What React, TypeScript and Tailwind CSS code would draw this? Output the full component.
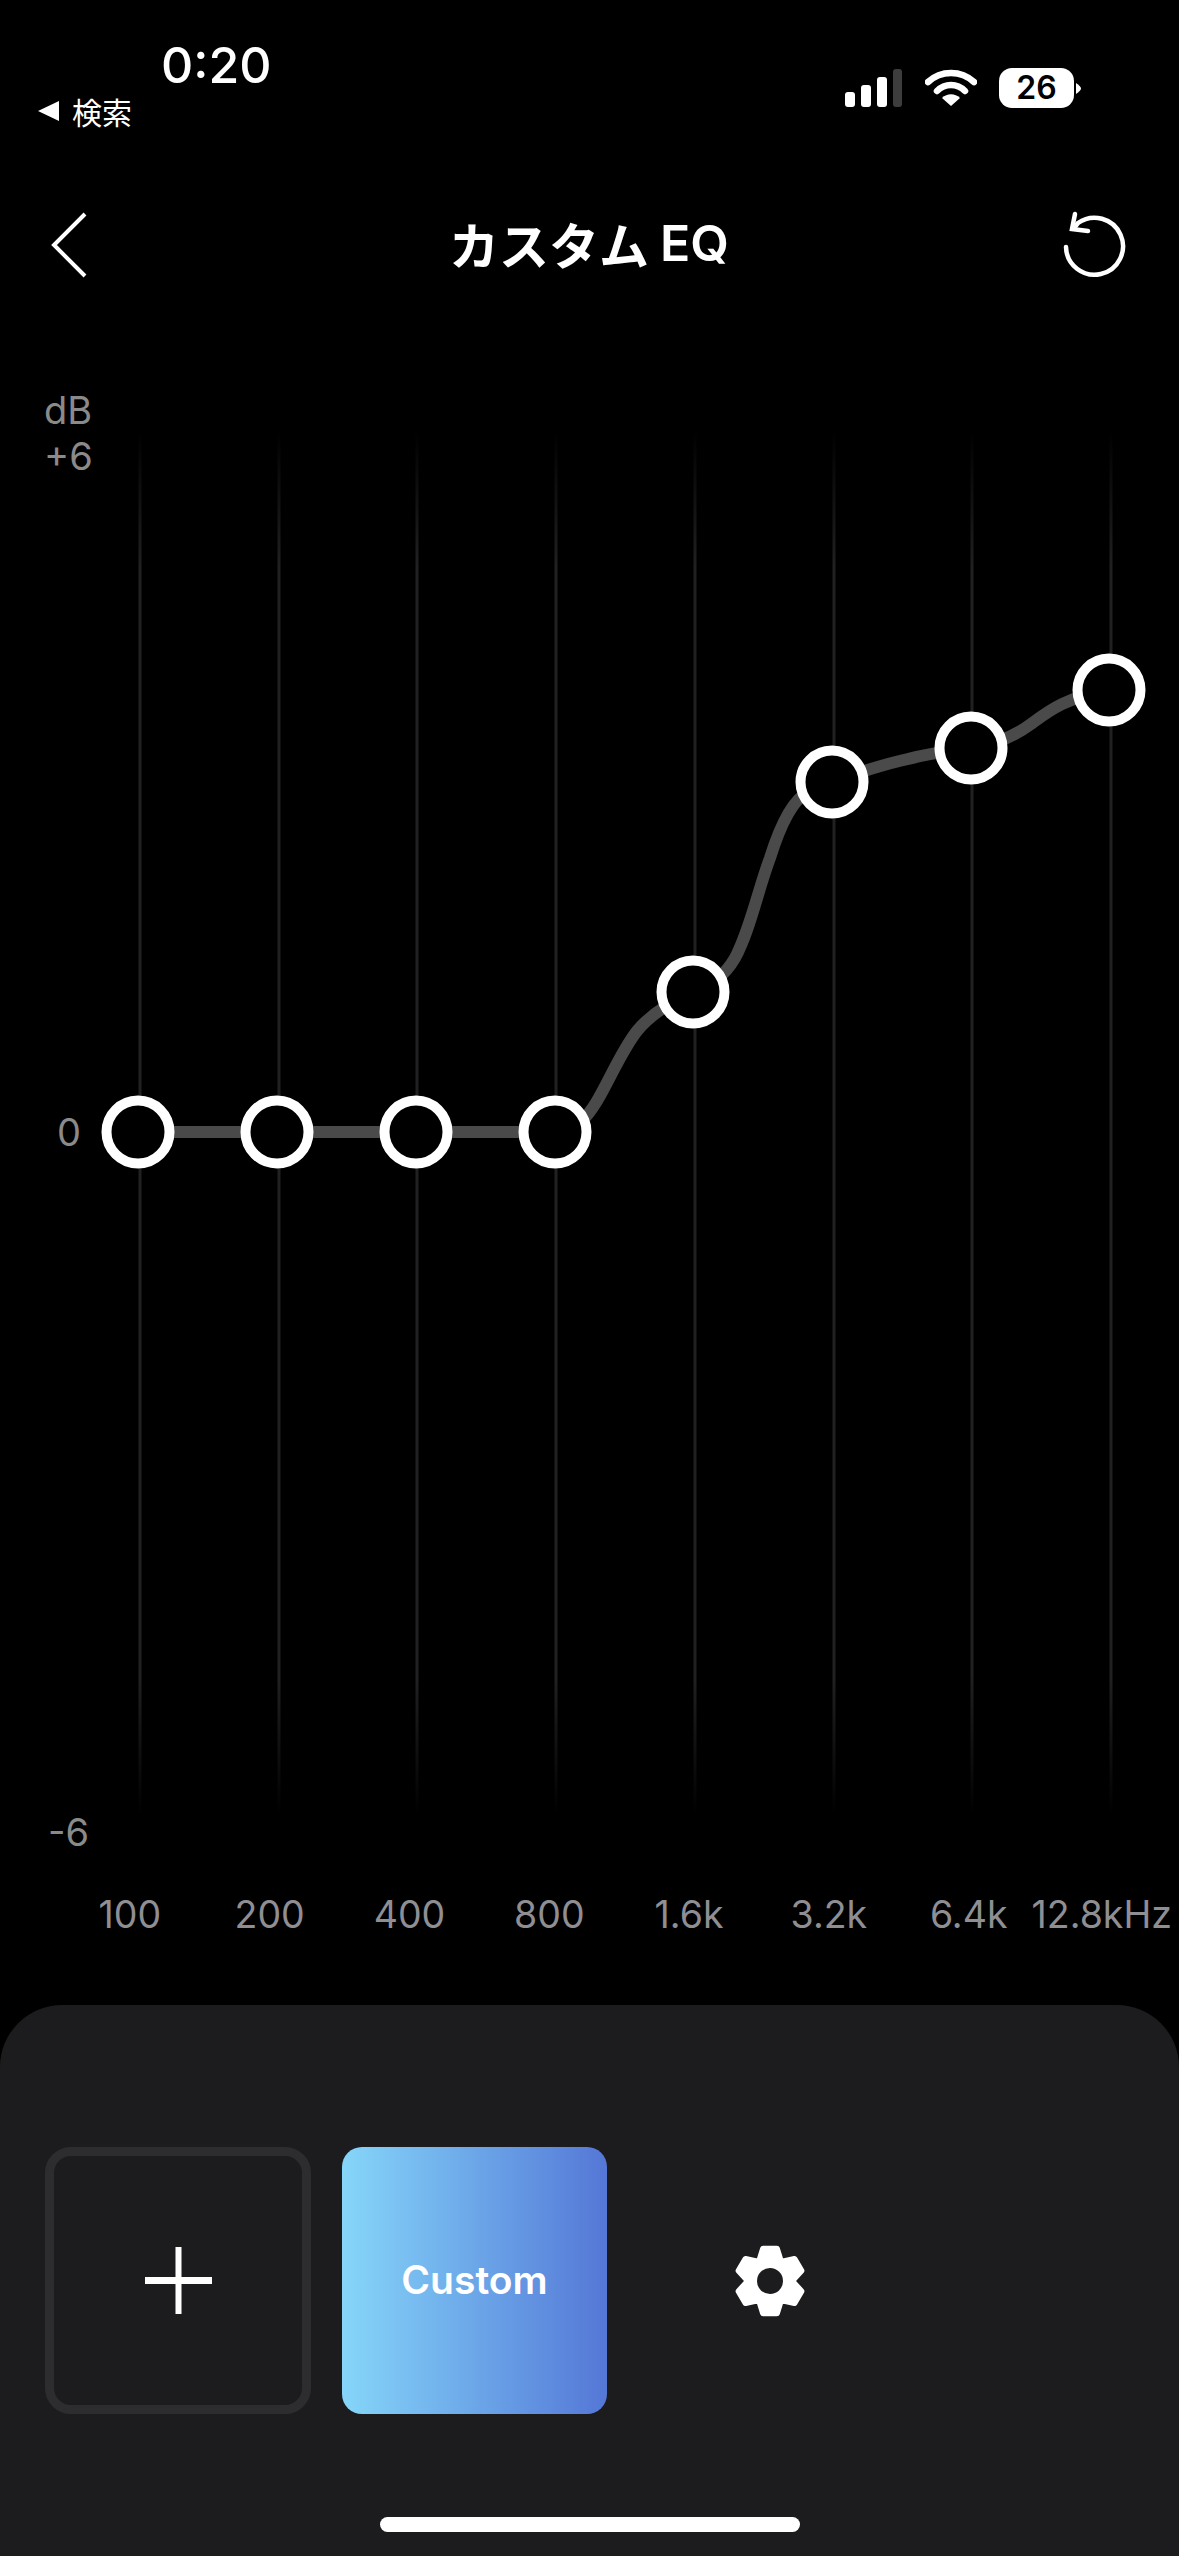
const gridXs = [140, 279, 417, 556, 695, 834, 972, 1111];
const knobs = [
  [138, 1132],
  [277, 1132],
  [416, 1132],
  [555, 1132],
  [693, 992],
  [832, 782],
  [971, 748],
  [1109, 690],
];
const freqs = ['100', '200', '400', '800', '1.6k', '3.2k', '6.4k'];

const curvePath =
  'M138 1132 L555 1132 C576 1132 588 1116 597 1101 C610 1079 622 1050 637 1031 C650 1015 668 1003 693 992 ' +
  'C712 983 724 977 735 958 C750 930 758 890 770 858 C780 826 792 800 808 792 C818 787 824 785 832 782 ' +
  'C860 772 885 764 908 759 C930 753 950 751 971 748 C992 745 1012 738 1031 724 C1050 710 1065 698 1109 690';

// six tooth gear, points worked out around the centre
function gearPoints(cx: number, cy: number) {
  const pts: string[] = [];
  for (let i = 0; i < 6; i++) {
    const a = -90 + i * 60;
    const corners: [number, number][] = [
      [-30, 22],
      [-12, 33],
      [12, 33],
      [30, 22],
    ];
    for (const [off, r] of corners) {
      const t = ((a + off) * Math.PI) / 180;
      pts.push(`${(cx + r * Math.cos(t)).toFixed(1)},${(cy + r * Math.sin(t)).toFixed(1)}`);
    }
  }
  return pts.join(' ');
}

function StatusIcons() {
  return (
    <div className="flex items-center self-start mt-[68px] mr-[98px]">
      <svg width="58" height="38" viewBox="0 0 58 38" className="mr-[22px]">
        <rect x="0" y="23" width="10" height="15" rx="3" fill="#fff" />
        <rect x="16" y="16" width="10" height="22" rx="3" fill="#fff" />
        <rect x="32" y="8" width="10" height="30" rx="3" fill="#fff" />
        <rect x="48" y="0" width="9" height="38" rx="3" fill="#3d3d3d" />
      </svg>
      <svg width="52" height="38" viewBox="0 0 52 38" className="mr-[22px]">
        <path d="M3 13 C16 1 36 1 49 13" fill="none" stroke="#fff" strokeWidth="6.5" strokeLinecap="round" />
        <path d="M12 22 C20 14 32 14 40 22" fill="none" stroke="#fff" strokeWidth="6.5" strokeLinecap="round" />
        <path d="M26 37 L17 29 C22 24 30 24 35 29 Z" fill="#fff" />
      </svg>
      <div className="w-[75px] h-[40px] rounded-[13px] bg-white flex items-center justify-center text-black text-[32px] font-semibold font-['Inter',sans-serif] leading-none">
        26
      </div>
      <svg width="5" height="11" viewBox="0 0 5 11" className="ml-[2px]">
        <path d="M0 0 C3 2 5 4 5 5.5 C5 7 3 9 0 11 Z" fill="#fff" />
      </svg>
    </div>
  );
}

export default function App() {
  return (
    <div className="w-[1179px] h-[2556px] bg-black flex flex-col overflow-hidden text-white font-['Inter','Noto_Sans_CJK_JP',sans-serif]">
      {/* status bar */}
      <div className="h-[190px] flex justify-between">
        <div className="pt-[39px] pl-[38px]">
          <div className="pl-[123px] text-[50px] leading-[52px] font-medium">0:20</div>
          <div className="flex items-center mt-[3px] h-[34px]">
            <svg width="22" height="20" viewBox="0 0 22 20" className="mr-[12px]">
              <path d="M0 10 L21 0 L21 20 Z" fill="#fff" />
            </svg>
            <span className="text-[30px] leading-none font-['Noto_Sans_CJK_JP',sans-serif]">検索</span>
          </div>
        </div>
        <StatusIcons />
      </div>

      {/* nav */}
      <div className="h-[110px] flex items-center justify-between pl-[50px] pr-[51px]">
        <div className="w-[66px]">
          <svg width="38" height="66" viewBox="0 0 38 66" className="block">
            <path d="M35 2 L4 33 L35 64" fill="none" stroke="#fff" strokeWidth="4" />
          </svg>
        </div>
        <h1 className="flex items-center gap-[11px] -mt-[4px] text-[50px] leading-none font-semibold">
          <span className="font-['Noto_Sans_CJK_JP',sans-serif]">カスタム</span>
          <span>EQ</span>
        </h1>
        <svg width="66" height="70" viewBox="1062 208 66 70">
          <path
            d="M1066 245 A28.5 28.5 0 1 0 1078 221 L1074 226"
            fill="none"
            stroke="#fff"
            strokeWidth="4.5"
            strokeLinecap="round"
          />
          <path d="M1075 212 L1072 227 L1088 229" fill="none" stroke="#fff" strokeWidth="4.5" strokeLinecap="round" />
        </svg>
      </div>

      {/* chart */}
      <div className="relative h-[1580px]">
        <svg width="1179" height="1580" viewBox="0 300 1179 1580" className="block">
          <defs>
            <linearGradient id="gridFade" gradientUnits="userSpaceOnUse" x1="0" y1="430" x2="0" y2="1815">
              <stop offset="0" stopColor="#212123" stopOpacity="0" />
              <stop offset="0.1" stopColor="#212123" />
              <stop offset="0.9" stopColor="#212123" />
              <stop offset="1" stopColor="#212123" stopOpacity="0" />
            </linearGradient>
          </defs>
          {gridXs.map((x) => (
            <rect key={x} x={x - 1.5} y="430" width="3" height="1385" fill="url(#gridFade)" />
          ))}
          <path d={curvePath} fill="none" stroke="#4a4a4a" strokeWidth="12" strokeLinecap="round" />
          {knobs.map(([x, y]) => (
            <circle key={x} cx={x} cy={y} r="31.5" fill="#000" stroke="#fff" strokeWidth="10" />
          ))}
        </svg>
        <div className="absolute left-[44px] top-[87px] text-[38px] leading-[46px] text-[#8a8a8a]">
          <div>dB</div>
          <div>+6</div>
        </div>
        <div className="absolute left-[57px] top-[808px] text-[38px] leading-[48px] text-[#8a8a8a]">0</div>
        <div className="absolute left-[48px] top-[1508px] text-[38px] leading-[48px] text-[#8a8a8a]">-6</div>
      </div>

      {/* freq labels */}
      <div className="h-[70px] flex items-center pl-[60px] text-[37.5px] text-[#8e8e93]">
        {freqs.map((f) => (
          <div key={f} className="w-[139.8px] text-center">
            {f}
          </div>
        ))}
        <div className="-ml-[7px] whitespace-nowrap">12.8kHz</div>
      </div>

      {/* presets */}
      <div className="mt-auto h-[551px] rounded-t-[62px] bg-[#1c1c1e] pt-[142px] px-[45px]">
        <div className="flex items-center">
          <div className="w-[266px] h-[267px] rounded-[26px] border-[9px] border-[#2d2d2f] flex items-center justify-center">
            <svg width="67" height="67" viewBox="0 0 67 67">
              <rect x="0" y="30" width="67" height="7" fill="#fff" />
              <rect x="30.5" y="0" width="6" height="67" fill="#fff" />
            </svg>
          </div>
          <div className="ml-[31px] w-[265px] h-[267px] rounded-[20px] bg-gradient-to-r from-[#86d6f9] to-[#5577d6] flex items-center justify-center text-[39px] font-semibold">
            Custom
          </div>
          <svg width="74" height="74" viewBox="0 0 74 74" className="ml-[126px]">
            <polygon points={gearPoints(37, 37)} fill="#fff" stroke="#fff" strokeWidth="6" strokeLinejoin="round" />
            <circle cx="37" cy="37" r="13" fill="#1c1c1e" />
          </svg>
        </div>
        <div className="mx-auto mt-[103px] w-[420px] h-[15px] rounded-full bg-white" />
      </div>
    </div>
  );
}
